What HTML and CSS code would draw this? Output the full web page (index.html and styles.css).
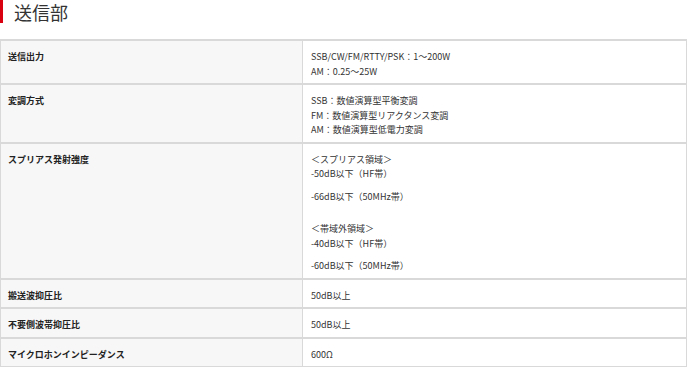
FILE: index.html
```html
<!DOCTYPE html>
<html lang="ja">
<head>
<meta charset="utf-8">
<title>送信部</title>
<link rel="stylesheet" href="styles.css">
</head>
<body>
<h2 class="section-title">送信部</h2>
<table class="spec">
  <tr>
    <th>送信出力</th>
    <td><p>SSB/CW/FM/RTTY/PSK：1～200W<br>AM：0.25～25W</p></td>
  </tr>
  <tr>
    <th>変調方式</th>
    <td><p>SSB：数値演算型平衡変調<br>FM：数値演算型リアクタンス変調<br>AM：数値演算型低電力変調</p></td>
  </tr>
  <tr>
    <th>スプリアス発射強度</th>
    <td>
      <p>＜スプリアス領域＞<br>-50dB以下（HF帯）</p>
      <p>-66dB以下（50MHz帯）</p>
      <p class="gap">＜帯域外領域＞<br>-40dB以下（HF帯）</p>
      <p>-60dB以下（50MHz帯）</p>
    </td>
  </tr>
  <tr>
    <th>搬送波抑圧比</th>
    <td><p>50dB以上</p></td>
  </tr>
  <tr>
    <th>不要側波帯抑圧比</th>
    <td><p>50dB以上</p></td>
  </tr>
  <tr>
    <th>マイクロホンインピーダンス</th>
    <td><p>600Ω</p></td>
  </tr>
</table>
</body>
</html>
```

FILE: styles.css
```css
html, body {
  margin: 0;
  padding: 0;
  background: #fff;
}
body {
  font-family: "Noto Sans CJK JP", "Noto Sans", sans-serif;
  color: #333;
  width: 688px;
}
.section-title {
  margin: 0 0 16px 0;
  height: 21px;
  padding-top: 2px;
  line-height: 21px;
  border-left: 3px solid #d9000f;
  padding-left: 11px;
  font-size: 18px;
  font-weight: 400;
  color: #333;
}
.spec {
  width: 687px;
  border-collapse: collapse;
  font-size: 9px;
  line-height: 14.5px;
}
.spec th, .spec td {
  border: 1px solid #d9d9d9;
  border-top-width: 2px;
  padding: 9px 7px 4px;
  vertical-align: top;
  text-align: left;
}
.spec th {
  width: 287px;
  background: #f7f7f7;
  font-weight: 700;
  color: #222;
}
.spec td {
  background: #fff;
  padding-left: 8px;
}
.spec p {
  margin: 0 0 8px;
}
.spec p:last-child {
  margin-bottom: 0;
}
.spec p.gap {
  margin-top: 18px;
}
```
